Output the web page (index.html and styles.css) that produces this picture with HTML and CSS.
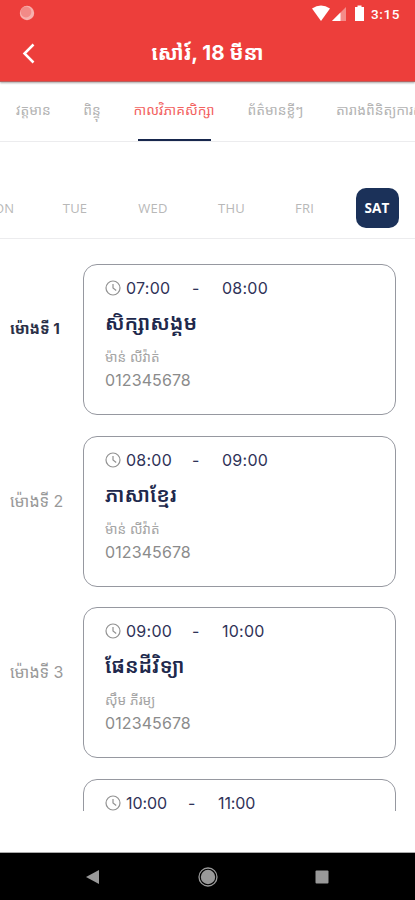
FILE: index.html
```html
<!DOCTYPE html>
<html lang="km">
<head>
<meta charset="utf-8">
<meta name="viewport" content="width=device-width, initial-scale=1">
<title>កាលវិភាគសិក្សា</title>
<link rel="stylesheet" href="styles.css">
</head>
<body>
<div class="phone">
  <header class="header">
    <div class="status">
      <svg class="dot" width="16" height="16" viewBox="0 0 16 16"><circle cx="8" cy="8" r="7.2" fill="#f7b0ad"/><circle cx="7" cy="7" r="5.4" fill="#f28a87"/></svg>
      <svg class="signals" width="54" height="18" viewBox="0 0 54 18" fill="#fff"><path d="M0 4.500Q9 -1.500 18 4.500L9 17Z"/><path d="M20 17L34 3V17Z" opacity=".4"/><path d="M20 17L28.500 8.500V17Z"/><path d="M43 3h2.500V1.500h4V3H52V17h-9Z"/></svg>
      <span class="clock">3:15</span>
    </div>
    <div class="titlebar">
      <svg class="back" width="14" height="22" viewBox="0 0 14 22"><path d="M11.500 1.500L2.500 10.500L11.500 19.500" fill="none" stroke="#fff" stroke-width="2.500"/></svg>
      <h1 class="title">សៅរ៍, 18 មីនា</h1>
    </div>
  </header>
  <nav class="tabs">
    <span class="tab t1">វត្តមាន</span>
    <span class="tab t2">ពិន្ទុ</span>
    <span class="tab t3 active">កាលវិភាគសិក្សា</span>
    <span class="tab t4">ព័ត៌មានខ្លីៗ</span>
    <span class="tab t5">តារាងពិនិត្យការសិក្សា</span>
  </nav>
  <div class="days">
    <span class="day mon">MON</span><span class="day tue">TUE</span><span class="day wed">WED</span><span class="day thu">THU</span><span class="day fri">FRI</span><span class="day sat">SAT</span>
  </div>
  <main class="list">
    <section class="row">
      <div class="period current">ម៉ោងទី 1</div>
      <article class="card">
        <div class="time"><svg class="ico" width="16" height="16" viewBox="0 0 16 16"><circle cx="8" cy="8" r="7"/><path d="M8 4v4l3.200 2.500"/></svg><span class="from">07:00</span><span class="dash">-</span><span>08:00</span></div>
        <h2 class="subject">សិក្សាសង្គម</h2>
        <div class="teacher">ម៉ាន់ លីវ៉ាត់</div>
        <div class="phone-no">012345678</div>
      </article>
    </section>
    <section class="row">
      <div class="period">ម៉ោងទី 2</div>
      <article class="card">
        <div class="time"><svg class="ico" width="16" height="16" viewBox="0 0 16 16"><circle cx="8" cy="8" r="7"/><path d="M8 4v4l3.200 2.500"/></svg><span class="from">08:00</span><span class="dash">-</span><span>09:00</span></div>
        <h2 class="subject">ភាសាខ្មែរ</h2>
        <div class="teacher">ម៉ាន់ លីវ៉ាត់</div>
        <div class="phone-no">012345678</div>
      </article>
    </section>
    <section class="row">
      <div class="period">ម៉ោងទី 3</div>
      <article class="card">
        <div class="time"><svg class="ico" width="16" height="16" viewBox="0 0 16 16"><circle cx="8" cy="8" r="7"/><path d="M8 4v4l3.200 2.500"/></svg><span class="from">09:00</span><span class="dash">-</span><span>10:00</span></div>
        <h2 class="subject">ផែនដីវិទ្យា</h2>
        <div class="teacher">ស៊ឹម ភីរម្យ</div>
        <div class="phone-no">012345678</div>
      </article>
    </section>
    <section class="row">
      <div class="period"></div>
      <article class="card">
        <div class="time last"><svg class="ico" width="16" height="16" viewBox="0 0 16 16"><circle cx="8" cy="8" r="7"/><path d="M8 4v4l3.200 2.500"/></svg><span class="from">10:00</span><span class="dash">-</span><span>11:00</span></div>
      </article>
    </section>
  </main>
  <footer class="navbar">
    <svg width="14" height="16" viewBox="0 0 14 16"><path d="M0 8L13 1V15Z" fill="#999"/></svg>
    <svg width="20" height="20" viewBox="0 0 20 20"><circle cx="10" cy="10" r="9" fill="none" stroke="#999" stroke-width="1.300"/><circle cx="10" cy="10" r="7.200" fill="#999"/></svg>
    <svg width="14" height="14" viewBox="0 0 14 14"><rect x=".5" y=".5" width="13" height="13" rx="1" fill="#999"/></svg>
  </footer>
</div>
</body>
</html>
```

FILE: styles.css
```css
* { box-sizing: border-box; }
body { margin: 0; background: #fff; font-family: "Inter", "Noto Sans Khmer", "Khmer OS", sans-serif; }
svg { display: block; flex: none; }
.phone { width: 415px; height: 900px; overflow: hidden; display: flex; flex-direction: column; }
.header { height: 82px; flex: none; background: #ed3e3b; color: #fff; border-bottom: 1px solid #b9605e; box-shadow: 0 1px 2px rgba(0,0,0,.35); z-index: 1; }
.status { height: 26px; display: flex; align-items: center; padding: 0 15px 0 19px; }
.signals { margin-left: auto; }
.clock { font: 500 13.5px/18px Roboto, sans-serif; margin-left: 5px; width: 29px; margin-top: 1px; white-space: nowrap; letter-spacing: .6px; }
.titlebar { height: 55px; display: grid; grid-template-columns: 58px 1fr 58px; align-items: center; }
.back { margin-left: 22px; }
.title { margin: 0 0 2px; text-align: center; font-size: 20.6px; line-height: 30px; font-weight: 700; white-space: nowrap; }
.tabs { height: 60px; flex: none; display: grid; grid-template-columns: 67px 50px 114px 89px 95px; border-bottom: 1px solid #ececee; overflow: hidden; }
.tab { color: #b4b4b4; font-size: 13.8px; line-height: 56px; height: 59px; white-space: nowrap; text-align: center; display: flex; justify-content: center; }
.t5 { justify-content: flex-start; padding-left: 16px; }
.active { color: #f3625f; position: relative; }
.active::after { content: ""; position: absolute; bottom: 0; left: 21px; width: 73px; height: 2px; background: #17274d; }
.days { height: 97px; flex: none; padding-top: 35px; display: grid; grid-template-columns: 36px 78px 78px 79px 67px 78px; align-items: center; border-bottom: 1px solid #ececee; }
.day { font: 500 13px/40px "Open Sans", sans-serif; color: #b8b8b8; text-align: center; letter-spacing: .2px; }
.mon { width: 32px; margin-left: -18px; }
.sat { justify-self: center; width: 43px; height: 40px; border-radius: 10px; background: #1b3159; color: #fff; font-weight: 700; font-size: 13.5px; }
.list { height: 572px; flex: none; padding: 25px 19px 0 0; overflow: hidden; display: flex; flex-direction: column; gap: 20.500px; }
.row { flex: none; display: grid; grid-template-columns: 83px 313px; height: 151.100px; }
.period { padding-left: 10px; margin-top: 51px; line-height: 28px; font-size: 16px; color: #999; white-space: nowrap; }
.current { color: #2b3047; font-weight: 700; font-size: 15.2px; }
.card { border: 1px solid #9698a0; border-radius: 14px; padding: 11px 21px 0; color: #8b8b8b; }
.time { display: flex; align-items: center; height: 24px; color: #303358; font-size: 16px; letter-spacing: .25px; white-space: nowrap; }
.ico { fill: none; stroke: #929292; stroke-width: 1.200; }
.from { width: 66px; margin-left: 5px; }
.dash { width: 30px; }
.last { letter-spacing: -.1px; }
.last .from { width: 62px; }
.subject { margin: 7px 0 0; font-size: 20.5px; line-height: 32px; font-weight: 600; color: #20284c; white-space: nowrap; }
.teacher { margin-top: 7px; font-size: 13.6px; line-height: 22px; color: #a5a5a5; white-space: nowrap; }
.phone-no { font-size: 16px; line-height: 25px; letter-spacing: .1px; }
.navbar { height: 48px; margin-top: auto; flex: none; border-top: 1px solid #aaa; background: #000; display: flex; align-items: center; justify-content: space-between; padding: 0 86px; }
```
